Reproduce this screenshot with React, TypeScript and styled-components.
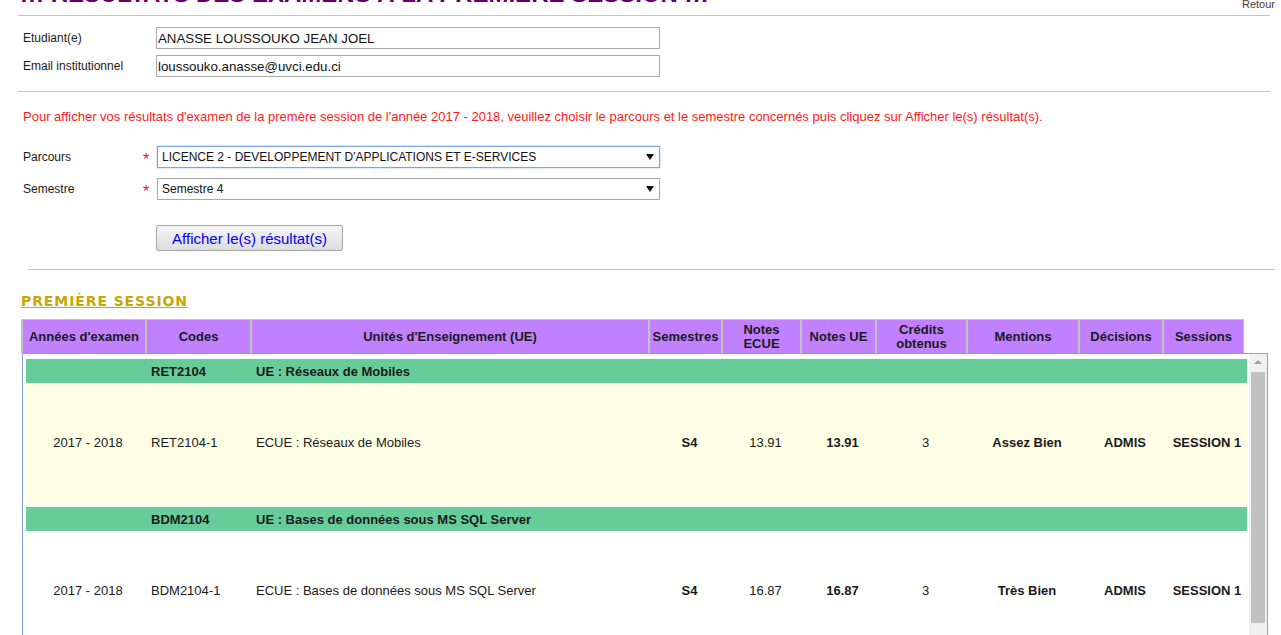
import React from 'react';
import styled, { createGlobalStyle } from 'styled-components';

const GlobalStyle = createGlobalStyle`
    html, body {
        margin: 0;
        padding: 0;
        background: #fff;
        overflow: hidden;
    }

    body {
        font-family: "Liberation Sans", Arial, sans-serif;
        color: #1a1a1a;
    }
`;

const Page = styled.div`
    width: 1281px;
    box-sizing: border-box;
    padding: 0 11px 0 18px;
`;

const TopBar = styled.div`
    display: flex;
    justify-content: space-between;
    align-items: flex-start;
    height: 10px;
    margin-right: -5px;
`;

const Title = styled.h1`
    margin: -20px 0 0 0;
    padding-left: 2px;
    font-size: 24px;
    line-height: 28px;
    font-weight: bold;
    color: #660066;
    white-space: nowrap;
`;

const BackLink = styled.a`
    margin-top: -2px;
    font-size: 11px;
    line-height: 13px;
    color: #4a3a2a;
    text-decoration: none;
    cursor: pointer;
`;

const Rule = styled.hr<{ $top: number; $left?: number; $right?: number }>`
    border: 0;
    height: 1px;
    background: #c4c4c4;
    margin: ${(p) => p.$top}px ${(p) => p.$right ?? 0}px 0 ${(p) => p.$left ?? 0}px;
`;

const Fields = styled.div<{ $top: number; $gap: number }>`
    display: flex;
    flex-direction: column;
    gap: ${(p) => p.$gap}px;
    margin-top: ${(p) => p.$top}px;
    padding-left: 5px;
`;

const InfoRow = styled.div`
    display: grid;
    grid-template-columns: 133px 504px;
    align-items: center;
    height: 22px;
`;

const ChoiceRow = styled.div`
    display: grid;
    grid-template-columns: 120px 14px 503px;
    align-items: center;
    height: 22px;
`;

const Label = styled.label`
    font-size: 12px;
    color: #1a1a1a;
`;

const Required = styled.span`
    color: #e02020;
    font-size: 16px;
    line-height: 16px;
    padding-top: 6px;
`;

const TextInput = styled.input`
    box-sizing: border-box;
    height: 22px;
    width: 100%;
    border: 1px solid #a9a9a9;
    padding: 0 1px;
    font-family: "Liberation Sans", Arial, sans-serif;
    font-size: 13.3px;
    color: #111;
    outline: none;
`;

const SelectBox = styled.div<{ $focused?: boolean }>`
    box-sizing: border-box;
    height: 22px;
    display: flex;
    align-items: center;
    justify-content: space-between;
    padding: 0 5px 0 4px;
    border: 1px solid ${(p) => (p.$focused ? '#7ba4dc' : '#a9a9a9')};
    box-shadow: ${(p) => (p.$focused ? '0 0 2px #9ec0ee' : 'none')};
    font-size: 12px;
    color: #111;
    background: #fff;
`;

const Arrow = styled.span`
    width: 0;
    height: 0;
    border-style: solid;
    border-width: 6px 4px 0 4px;
    border-color: #111 transparent transparent transparent;
`;

const Notice = styled.p`
    margin: 17px 0 0 5px;
    font-size: 13px;
    line-height: 15px;
    color: #ff1a1a;
`;

const SubmitButton = styled.button`
    display: block;
    box-sizing: border-box;
    margin: 25px 0 0 138px;
    width: 187px;
    height: 26px;
    border: 1px solid #a6a6a6;
    border-radius: 2px;
    background: linear-gradient(#f6f6f6, #dddddd);
    color: #0000ff;
    font-family: "Liberation Sans", Arial, sans-serif;
    font-size: 15px;
    padding: 0;
`;

const SessionTitle = styled.h2`
    margin: 23px 0 0 3px;
    font-family: "Comic Sans MS", "DejaVu Sans", sans-serif;
    font-size: 14px;
    line-height: 17px;
    font-weight: bold;
    letter-spacing: 0.9px;
    color: #c9a600;
    text-decoration: underline;
`;

const HeadTable = styled.table`
    margin: 9px 0 0 3px;
    width: 1223px;
    table-layout: fixed;
    border-collapse: separate;
    border-spacing: 0;
    background: #c080ff;
`;

const HeadCell = styled.th<{ $w: number }>`
    box-sizing: border-box;
    width: ${(p) => p.$w}px;
    height: 34px;
    padding: 0;
    border-top: 1px solid #c2c2c2;
    border-left: 2px solid #c2c2c2;
    font-size: 13px;
    line-height: 14px;
    font-weight: bold;
    text-align: center;
    vertical-align: middle;
    color: #1a1a1a;

    &:last-child {
        border-right: 1px solid #c2c2c2;
    }
`;

const ScrollBox = styled.div`
    box-sizing: border-box;
    margin-left: 4px;
    width: 1246px;
    height: 290px;
    display: flex;
    border: 1px solid #7fa3d6;
    border-bottom: 0;
    overflow: hidden;
`;

const ScrollContent = styled.div`
    flex: 1;
    padding: 5px 1px 0 3px;
`;

const BodyTable = styled.table`
    width: 1221px;
    table-layout: fixed;
    border-collapse: separate;
    border-spacing: 0;
`;

const Cell = styled.td<{ $center?: boolean; $bold?: boolean }>`
    box-sizing: border-box;
    padding: 0 1px;
    font-size: 13px;
    font-weight: ${(p) => (p.$bold ? 'bold' : 'normal')};
    text-align: ${(p) => (p.$center ? 'center' : 'left')};
    vertical-align: middle;
    white-space: nowrap;
    color: #1a1a1a;
`;

const GroupRow = styled.tr<{ $spaced?: boolean }>`
    td {
        height: ${(p) => (p.$spaced ? 26 : 24)}px;
        background: #66cc99;
        font-weight: bold;
        border-top: ${(p) => (p.$spaced ? '2px solid #fff' : '0')};
    }
`;

const ItemRow = styled.tr<{ $bg: string }>`
    td {
        height: 122px;
        padding-bottom: 3px;
        background: ${(p) => p.$bg};
    }
`;

const Scrollbar = styled.div`
    width: 18px;
    flex: none;
    display: flex;
    flex-direction: column;
    background: #f0f0f0;
`;

const ScrollArrow = styled.div`
    height: 16px;
    display: flex;
    align-items: center;
    justify-content: center;

    &::before {
        content: '';
        border-style: solid;
        border-width: 0 4px 4px 4px;
        border-color: transparent transparent #a3a3a3 transparent;
    }
`;

const Thumb = styled.div`
    margin: 2px 2px 0 2px;
    height: 251px;
    background: #c1c1c1;
`;

const columns = [
    { title: "Années d'examen", w: 124 },
    { title: 'Codes', w: 105 },
    { title: "Unités d'Enseignement (UE)", w: 398 },
    { title: 'Semestres', w: 73 },
    { title: 'Notes ECUE', w: 79, lines: ['Notes', 'ECUE'] },
    { title: 'Notes UE', w: 75 },
    { title: 'Crédits obtenus', w: 91, lines: ['Crédits', 'obtenus'] },
    { title: 'Mentions', w: 112 },
    { title: 'Décisions', w: 84 },
    { title: 'Sessions', w: 82 },
];

const bodyWidths = [124, 105, 398, 73, 79, 75, 91, 112, 84, 80];

const results = [
    {
        code: 'RET2104',
        ue: 'UE : Réseaux de Mobiles',
        bg: '#ffffe6',
        year: '2017 - 2018',
        ecueCode: 'RET2104-1',
        ecue: 'ECUE : Réseaux de Mobiles',
        semester: 'S4',
        noteEcue: '13.91',
        noteUe: '13.91',
        credits: '3',
        mention: 'Assez Bien',
        decision: 'ADMIS',
        session: 'SESSION 1',
    },
    {
        code: 'BDM2104',
        ue: 'UE : Bases de données sous MS SQL Server',
        bg: '#ffffff',
        year: '2017 - 2018',
        ecueCode: 'BDM2104-1',
        ecue: 'ECUE : Bases de données sous MS SQL Server',
        semester: 'S4',
        noteEcue: '16.87',
        noteUe: '16.87',
        credits: '3',
        mention: 'Très Bien',
        decision: 'ADMIS',
        session: 'SESSION 1',
    },
];

const App = () => {
    return (
        <>
            <GlobalStyle />
            <Page>
                <TopBar>
                    <Title>!!! RÉSULTATS DES EXAMENS À LA PREMIÈRE SESSION !!!</Title>
                    <BackLink>Retour</BackLink>
                </TopBar>
                <Rule $top={5} />

                <Fields $top={11} $gap={6}>
                    <InfoRow>
                        <Label>Etudiant(e)</Label>
                        <TextInput readOnly value="ANASSE LOUSSOUKO JEAN JOEL" />
                    </InfoRow>
                    <InfoRow>
                        <Label>Email institutionnel</Label>
                        <TextInput readOnly value="loussouko.anasse@uvci.edu.ci" />
                    </InfoRow>
                </Fields>
                <Rule $top={14} />

                <Notice>
                    Pour afficher vos résultats d'examen de la premère session de l'année 2017 - 2018, veuillez choisir
                    le parcours et le semestre concernés puis cliquez sur Afficher le(s) résultat(s).
                </Notice>

                <Fields $top={22} $gap={10}>
                    <ChoiceRow>
                        <Label>Parcours</Label>
                        <Required>*</Required>
                        <SelectBox $focused>
                            <span>LICENCE 2 - DEVELOPPEMENT D'APPLICATIONS ET E-SERVICES</span>
                            <Arrow />
                        </SelectBox>
                    </ChoiceRow>
                    <ChoiceRow>
                        <Label>Semestre</Label>
                        <Required>*</Required>
                        <SelectBox>
                            <span>Semestre 4</span>
                            <Arrow />
                        </SelectBox>
                    </ChoiceRow>
                </Fields>

                <SubmitButton>Afficher le(s) résultat(s)</SubmitButton>
                <Rule $top={18} $left={10} $right={-5} />

                <SessionTitle>PREMIÈRE SESSION</SessionTitle>

                <HeadTable>
                    <thead>
                        <tr>
                            {columns.map((c) => (
                                <HeadCell key={c.title} $w={c.w}>
                                    {c.lines ? (
                                        <>
                                            {c.lines[0]}
                                            <br />
                                            {c.lines[1]}
                                        </>
                                    ) : (
                                        c.title
                                    )}
                                </HeadCell>
                            ))}
                        </tr>
                    </thead>
                </HeadTable>

                <ScrollBox>
                    <ScrollContent>
                        <BodyTable>
                            <colgroup>
                                {bodyWidths.map((w, i) => (
                                    <col key={i} width={w} />
                                ))}
                            </colgroup>
                            <tbody>
                                {results.map((r, i) => (
                                    <React.Fragment key={r.code}>
                                        <GroupRow $spaced={i > 0}>
                                            <Cell />
                                            <Cell>{r.code}</Cell>
                                            <Cell>{r.ue}</Cell>
                                            <Cell colSpan={7} />
                                        </GroupRow>
                                        <ItemRow $bg={r.bg}>
                                            <Cell $center>{r.year}</Cell>
                                            <Cell>{r.ecueCode}</Cell>
                                            <Cell>{r.ecue}</Cell>
                                            <Cell $center $bold>{r.semester}</Cell>
                                            <Cell $center>{r.noteEcue}</Cell>
                                            <Cell $center $bold>{r.noteUe}</Cell>
                                            <Cell $center>{r.credits}</Cell>
                                            <Cell $center $bold>{r.mention}</Cell>
                                            <Cell $center $bold>{r.decision}</Cell>
                                            <Cell $center $bold>{r.session}</Cell>
                                        </ItemRow>
                                    </React.Fragment>
                                ))}
                            </tbody>
                        </BodyTable>
                    </ScrollContent>
                    <Scrollbar>
                        <ScrollArrow />
                        <Thumb />
                    </Scrollbar>
                </ScrollBox>
            </Page>
        </>
    );
};

export default App;
